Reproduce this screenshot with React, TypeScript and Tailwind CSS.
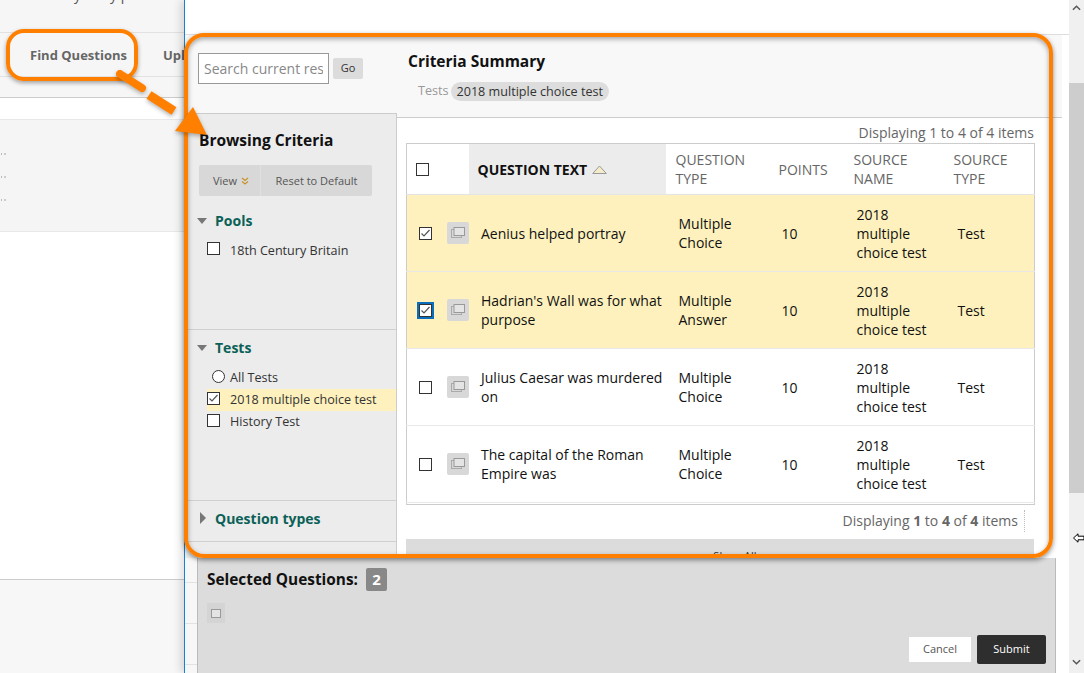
const rows = [
  { text: "Aenius helped portray", type: ["Multiple", "Choice"], on: true, focus: false },
  { text: "Hadrian's Wall was for what purpose", type: ["Multiple", "Answer"], on: true, focus: true },
  { text: "Julius Caesar was murdered on", type: ["Multiple", "Choice"], on: false, focus: false },
  { text: "The capital of the Roman Empire was", type: ["Multiple", "Choice"], on: false, focus: false },
];

const Check = ({ on = false, size = "w-[13px] h-[13px]" }: { on?: boolean; size?: string }) => (
  <span className={`block ${size} border border-[#333] bg-white shrink-0`}>
    {on && (
      <svg viewBox="0 0 11 11" className="w-full h-full">
        <path d="M1.5 5.5 L4 8 L9.5 2" fill="none" stroke="#555" strokeWidth="1.2" />
      </svg>
    )}
  </span>
);

const CopyIcon = ({ box = "w-[22px] h-[22px]" }: { box?: string }) => (
  <span className={`flex items-center justify-center ${box} bg-[#d8d8d8] rounded-[2px]`}>
    <svg viewBox="0 0 14 12" className="w-[14px] h-[12px]">
      <rect x="0.5" y="2.5" width="10" height="8" fill="none" stroke="#aaa" />
      <rect x="3" y="0.5" width="10.5" height="8" fill="#e4e4e4" stroke="#999" />
    </svg>
  </span>
);

const Triangle = ({ open = true }: { open?: boolean }) =>
  open ? (
    <span className="w-0 h-0 border-x-[5.5px] border-x-transparent border-t-[6px] border-t-[#777]" />
  ) : (
    <span className="w-0 h-0 border-y-[6px] border-y-transparent border-l-[6px] border-l-[#777]" />
  );

function Sidebar() {
  return (
    <div className="w-[212px] shrink-0 flex flex-col">
      <div className="h-[78px] bg-[#f8f8f8] flex items-start gap-1 pl-[13px] pt-[18px]">
        <input
          readOnly
          placeholder="Search current res"
          className="w-[131px] h-[31px] border border-[#999] bg-white px-[5px] text-[14px] placeholder:text-[#888] outline-none"
        />
        <button className="w-[30px] h-[21px] mt-[5px] bg-[#dcdcdc] rounded-[2px] text-[11px] text-[#333]">Go</button>
      </div>
      <div className="flex-1 bg-[#ececec] border-t border-[#ccc] border-r flex flex-col">
        <h2 className="text-[15.5px] font-bold text-[#111] pl-[14px] pt-[15px] leading-[22px]">Browsing Criteria</h2>
        <div className="flex ml-[14px] mt-[14px] h-[31px] text-[11px] text-[#555]">
          <button className="w-[61px] bg-[#d8d8d8] rounded-l-[2px] flex items-center justify-start pl-[14px] pt-[2px] gap-[4px]">
            View
            <svg viewBox="0 0 8 8" className="w-2 h-2 -mt-[2px]">
              <path d="M1 1 L4 3.5 L7 1 M1 4.5 L4 7 L7 4.5" fill="none" stroke="#c8922a" strokeWidth="1.2" />
            </svg>
          </button>
          <button className="w-[112px] bg-[#d8d8d8] rounded-r-[2px] border-l border-[#e0e0e0] pt-[2px]">Reset to Default</button>
        </div>
        <section className="h-[134px] border-b border-[#d0d0d0] pl-3 pt-[15px]">
          <div className="flex items-center gap-[8px] text-[14px] font-bold text-[#0b6157] leading-[20px]">
            <Triangle />
            Pools
          </div>
          <label className="flex items-start gap-[10px] ml-[10px] mt-[11px] text-[12.6px] text-[#333] leading-[18px]">
            <Check />
            18th Century Britain
          </label>
        </section>
        <section className="h-[171px] border-b border-[#d0d0d0] pt-[8px]">
          <div className="flex items-center gap-[8px] pl-3 text-[14px] font-bold text-[#0b6157] leading-[20px]">
            <Triangle />
            Tests
          </div>
          <div className="mt-[9px] pl-[22px] text-[12.6px] text-[#333] leading-[22px]">
            <label className="flex items-center h-[22px] pl-[5px] gap-[5px]">
              <span className="w-[13px] h-[13px] rounded-full border border-[#333] bg-white -mt-[3px]" />
              All Tests
            </label>
            <label className="flex items-center h-[22px] gap-[10px] bg-[#fef1bd]">
              <span className="-mt-[3px]"><Check on /></span>
              2018 multiple choice test
            </label>
            <label className="flex items-center h-[22px] gap-[10px]">
              <span className="-mt-[3px]"><Check /></span>
              History Test
            </label>
          </div>
        </section>
        <section className="h-[41px] border-b border-[#d0d0d0] flex items-center gap-[9px] pl-[15px] pb-[6px] text-[14px] font-bold text-[#0b6157]">
          <Triangle open={false} />
          <span>Question types</span>
        </section>
      </div>
    </div>
  );
}

function QuestionTable() {
  return (
    <table className="table-fixed w-[628px] ml-[9px] border border-[#ccc] border-collapse text-[14px] text-[#111] leading-[19px]">
      <colgroup>
        <col className="w-[36px]" />
        <col className="w-[26px]" />
        <col className="w-[197px]" />
        <col className="w-[104px]" />
        <col className="w-[75px]" />
        <col className="w-[100px]" />
        <col className="w-[90px]" />
      </colgroup>
      <thead>
        <tr className="h-[51px] text-left font-normal text-[#666] border-b border-[#e4e4e4]">
          <th colSpan={2} className="pl-[9px] font-normal">
            <Check />
          </th>
          <th className="bg-[#ececec] pl-[9px] font-bold text-[#111]">
            <span className="flex items-center gap-[5px]">
              QUESTION TEXT
              <svg viewBox="0 0 15 9" className="w-[15px] h-[9px]">
                <path d="M0.7 8.5 L7.5 1 L14.3 8.5 Z" fill="#f4ecc8" stroke="#999" />
              </svg>
            </span>
          </th>
          <th className="pl-[10px] font-normal">QUESTION<br />TYPE</th>
          <th className="pl-[9px] font-normal">POINTS</th>
          <th className="pl-[9px] font-normal">SOURCE<br />NAME</th>
          <th className="pl-[9px] font-normal">SOURCE<br />TYPE</th>
        </tr>
      </thead>
      <tbody>
        {rows.map((r) => (
          <tr key={r.text} className={`h-[77px] border-b border-[#e8e8e8] ${r.on ? "bg-[#fef1bd]" : "bg-white"}`}>
            <td className="pl-[12px]">
              {r.focus ? (
                <span className="block w-[13px] h-[13px] outline-2 outline-[#0a6ebd]"><Check on /></span>
              ) : (
                <Check on={r.on} />
              )}
            </td>
            <td className="pl-[4px]"><CopyIcon /></td>
            <td className="pl-[12.5px]">{r.text}</td>
            <td className="pl-[13px]">{r.type[0]}<br />{r.type[1]}</td>
            <td className="pl-3">10</td>
            <td className="pl-3">2018<br />multiple<br />choice test</td>
            <td className="pl-[13px]">Test</td>
          </tr>
        ))}
        <tr className="h-[2px]"><td colSpan={7} /></tr>
      </tbody>
    </table>
  );
}

function Content() {
  return (
    <div className="flex-1 flex flex-col">
      <div className="h-[83px] bg-[#f8f8f8] border-b border-[#ccc] pl-[11px] pt-[15px]">
        <h2 className="text-[15.5px] font-bold text-[#111] leading-[22px]">Criteria Summary</h2>
        <div className="flex items-center gap-[2px] ml-[10px] mt-[10px] text-[12.6px]">
          <span className="text-[#999]">Tests</span>
          <span className="bg-[#ddd] rounded-full px-[6px] leading-[19px] text-[#333]">2018 multiple choice test</span>
        </div>
      </div>
      <div className="flex-1 bg-white flex flex-col overflow-hidden">
        <div className="w-[637px] text-right text-[14px] text-[#666] leading-[20px] h-[25px] pt-[5px]">Displaying 1 to 4 of 4 items</div>
        <QuestionTable />
        <div className="w-[628px] ml-[9px] flex justify-end items-center h-[34px] pb-[2px] text-[14px] text-[#666] pr-[9px] shrink-0">
          <span className="border-r border-dotted border-[#bbb] pr-[6px] leading-[22px]">
            Displaying <b>1</b> to <b>4</b> of <b>4</b> items
          </span>
        </div>
        <div className="w-[628px] ml-[9px] flex-1 bg-[#dcdcdc] text-center text-[11px] text-[#333] pt-[9px] pl-[30px]">Show All</div>
      </div>
    </div>
  );
}

function SelectedPanel() {
  return (
    <div className="flex-1 flex">
      <div className="w-[12px] bg-[#f7f7f7] flex flex-col">
        <div className="h-[25px] border-b border-[#e2e2e2]" />
        <div className="h-[41px] border-b border-[#e2e2e2]" />
        <div className="h-[41px] border-b border-[#e2e2e2]" />
      </div>
      <div className="w-[859px] bg-[#dcdcdc] border-l border-r border-[#bbb] flex flex-col pl-[9px] pr-[9px]">
        <div className="flex items-center gap-2 pt-[10px] h-[33px]">
          <span className="text-[15.4px] font-bold text-[#111]">Selected Questions:</span>
          <span className="w-[21px] h-[23px] bg-[#888] rounded-[2px] text-white font-bold text-[15px] text-center leading-[23px]">2</span>
        </div>
        <div className="mt-[12px] w-[18px] h-[20px] bg-[#d4d4d4] flex items-center justify-center">
          <span className="block w-[10px] h-[9px] border border-[#999] bg-[#e4e4e4]" />
        </div>
        <div className="flex justify-end items-center gap-[6px] mt-[12px] text-[11px]">
          <button className="w-[62px] h-[25px] bg-white text-[#555]">Cancel</button>
          <button className="w-[69px] h-[29px] bg-[#2e2e2e] text-white rounded-[2px]">Submit</button>
        </div>
      </div>
    </div>
  );
}

export default function App() {
  return (
    <div
      className="relative w-[1084px] h-[673px] overflow-hidden flex bg-white"
      style={{ fontFamily: '"Open Sans", sans-serif' }}
    >
      <div className="w-[184px] shrink-0 flex flex-col">
        <div className="h-[33px] bg-[#f6f6f6] border-b border-[#e2e2e2] overflow-hidden">
          <div className="-mt-[15px] pl-[74px] text-[14px] leading-[19px] text-[#555] whitespace-pre">y        y p</div>
        </div>
        <div className="h-[44px] bg-[#f6f6f6] border-b border-[#e2e2e2] flex items-center gap-9 pl-[30px] pt-[2px] text-[13px] font-bold text-[#666] whitespace-nowrap overflow-hidden">
          <span>Find Questions</span>
          <span>Upload</span>
        </div>
        <div className="h-[21px] bg-[#f6f6f6] border-b border-[#ccc]" />
        <div className="h-[21px] bg-white" />
        <div className="h-[113px] bg-[#f5f5f5] border-y border-[#e8e8e8] flex flex-col gap-[21px] pt-[33px] pl-px">
          {[0, 1, 2].map((i) => (
            <span key={i} className="flex gap-[2px]">
              <span className="w-px h-[2px] bg-[#bbb]" />
              <span className="w-[2px] h-[2px] bg-[#ccc]" />
            </span>
          ))}
        </div>
        <div className="flex-1 bg-white" />
        <div className="h-[94px] bg-[#f7f7f7] border-t border-[#ccc]" />
      </div>
      <div className="w-[885px] shrink-0 border-l border-[#1a7fd0] flex flex-col shadow-[-4px_0_8px_rgba(0,0,0,0.12)]">
        <div className="h-[35px] bg-white border-b border-[#ddd] shrink-0" />
        <div className="h-[523px] flex shrink-0">
          <Sidebar />
          <Content />
          <div className="w-[7px] bg-white" />
        </div>
        <SelectedPanel />
      </div>
      <div className="flex-1 bg-[#f0f0f0] flex flex-col">
        <div className="h-[83px] flex justify-center pt-[5px]">
          <svg viewBox="0 0 10 6" className="w-[9px] h-[6px]">
            <path d="M1 5 L5 1 L9 5" fill="none" stroke="#555" strokeWidth="1.6" />
          </svg>
        </div>
        <div className="h-[410px] bg-[#cdcdcd]" />
        <div className="flex-1 flex flex-col justify-end items-center pb-[8px]">
          <svg viewBox="0 0 10 6" className="w-[9px] h-[6px]">
            <path d="M1 1 L5 5 L9 1" fill="none" stroke="#555" strokeWidth="1.6" />
          </svg>
        </div>
      </div>
      <svg viewBox="0 0 14 10" className="absolute left-[1073px] top-[533px] w-[14px] h-[10px]">
        <path d="M0.5 5 L5 0.8 V3.2 H11 V6.8 H5 V9.2 Z" fill="#fff" stroke="#000" />
      </svg>
      {/* orange annotation on top of the screenshot */}
      <div className="absolute left-[184px] top-[33px] w-[869px] h-[525px] border-[4px] border-[#ff8000] rounded-[20px] shadow-[0_2px_5px_rgba(0,0,0,0.45),inset_0_2px_5px_rgba(0,0,0,0.35)]" />
      <div className="absolute left-[6px] top-[29px] w-[132px] h-[52px] border-[4px] border-[#ff8000] rounded-[18px] shadow-[0_2px_4px_rgba(0,0,0,0.35)]" />
      <svg viewBox="0 0 1084 673" className="absolute inset-0 w-[1084px] h-[673px] pointer-events-none drop-shadow-[0_2px_2px_rgba(0,0,0,0.3)]">
        <path d="M120 74 L142 88" stroke="#ff8000" strokeWidth="8" strokeLinecap="round" fill="none" />
        <path d="M149 95 L174 111" stroke="#ff8000" strokeWidth="9" fill="none" />
        <path d="M193 107 L175 131 L207 135 Z" fill="#ff8000" />
      </svg>
    </div>
  );
}
